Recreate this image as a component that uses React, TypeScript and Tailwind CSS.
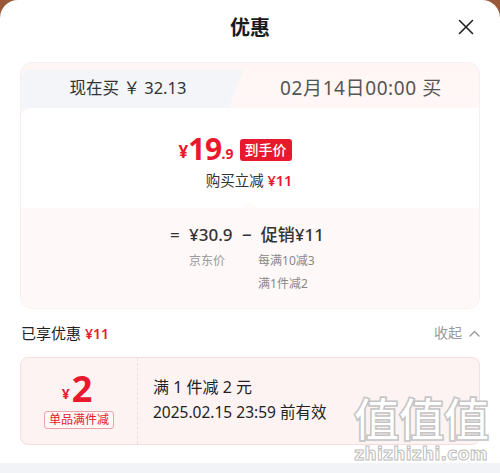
import React from "react";

const font = { fontFamily: '"Noto Sans", "Noto Sans CJK SC", sans-serif' };

export default function App() {
  return (
    <div className="w-[500px] h-[473px] bg-[#9a5a3a] overflow-hidden" style={font}>
      <div className="relative w-[500px] h-[473px] bg-white rounded-t-[18px] overflow-hidden flex flex-col">
        {/* header */}
        <div className="relative h-[56px] flex items-center justify-center">
          <span className="text-[20px] font-semibold text-[#1a1a1a] leading-none">优惠</span>
          <svg className="absolute right-[26px] top-[19px]" width="16" height="16" viewBox="0 0 16 16" fill="none" stroke="#222" strokeWidth="1.6" strokeLinecap="round">
            <path d="M1.5 1.5 L14.5 14.5 M14.5 1.5 L1.5 14.5" />
          </svg>
        </div>

        {/* main card */}
        <div className="mx-5 mt-[6px] rounded-xl border border-[#f8f0f0] overflow-hidden bg-gradient-to-b from-[#fff5f5] to-white">
          <div className="flex h-[45px]">
            <div className="relative w-[222px] mt-[6px]">
              <div className="absolute inset-0 bg-[#f4f5f9] rounded-tl-[10px] [clip-path:polygon(0_0,100%_0,calc(100%-14px)_100%,0_100%)]" />
              <div className="relative h-full flex items-center justify-center pr-[8px] text-[16.5px] text-[#333] leading-none">
                现在买 ￥ 32.13
              </div>
            </div>
            <div className="flex-1 flex items-center justify-center pt-[6px] text-[19px] tracking-[0.6px] text-[#555] leading-none">
              02月14日00:00 买
            </div>
          </div>

          <div className="bg-white rounded-tl-[10px] h-[100px] flex flex-col items-center pt-[28px]">
            <div className="flex items-end h-[26px] ml-[-30px]">
              <span className="text-[#e8192c] font-bold text-[17px] leading-none mb-[2px]">¥</span>
              <span className="text-[#e8192c] font-bold text-[30px] leading-none tracking-[-0.5px] mb-[-2px]">19</span>
              <span className="text-[#e8192c] font-bold text-[14px] leading-none mb-[1px]">.9</span>
              <span className="ml-[6px] mb-[1px] bg-[#e8192c] text-white text-[14px] font-medium leading-none px-[5px] py-[4px] rounded-[3px]">到手价</span>
            </div>
            <div className="mt-[11px] ml-[-2px] text-[14.5px] text-[#333] leading-none">
              购买立减 <span className="text-[#e8192c] font-semibold">¥11</span>
            </div>
          </div>

          <div className="relative bg-[#fff8f8] h-[100px] flex justify-center pt-[16px]">
            <div className="absolute left-1/2 -top-[6px] -ml-[7px] w-0 h-0 border-l-[7px] border-r-[7px] border-b-[6px] border-l-transparent border-r-transparent border-b-[#fff8f8]" />
            <div className="flex flex-col ml-[-6px]">
              <div className="flex items-center gap-x-[9px] h-[20px] text-[17px] text-[#333] font-medium leading-none">
                <span className="w-[10px]">=</span>
                <span className="w-[44px]">¥30.9</span>
                <span>−</span>
                <span>促销¥11</span>
              </div>
              <div className="flex text-[12px] leading-none">
                <span className="ml-[19px] w-[53px] text-[#999] mt-[11px]">京东价</span>
                <div className="ml-[16px] flex flex-col text-[#888] gap-[11px] mt-[11px]">
                  <span>每满10减3</span>
                  <span>满1件减2</span>
                </div>
              </div>
            </div>
          </div>
        </div>

        {/* enjoyed */}
        <div className="mx-5 mt-[14px] flex items-center justify-between h-[20px]">
          <span className="text-[15px] text-[#222] leading-none pl-[1px]">
            已享优惠 <span className="text-[#e8192c] font-semibold text-[14px]">¥11</span>
          </span>
          <span className="flex items-center text-[14px] text-[#999] leading-none">
            收起
            <svg className="ml-[7px]" width="11" height="7" viewBox="0 0 11 7" fill="none" stroke="#999" strokeWidth="1.4" strokeLinecap="round" strokeLinejoin="round">
              <path d="M1 6 L5.5 1.5 L10 6" />
            </svg>
          </span>
        </div>

        {/* coupon */}
        <div className="mx-5 mt-[14px] h-[88px] rounded-lg border border-[#f6dede] bg-[#fdf3f3] flex">
          <div className="w-[117px] border-r border-dashed border-[#f3dcdc] flex flex-col items-center justify-center">
            <div className="flex items-end text-[#e8192c] font-bold leading-none ml-[-4px]">
              <span className="text-[14px] mb-[3px]">¥</span>
              <span className="text-[36px] ml-[2px] leading-[30px]">2</span>
            </div>
            <span className="mt-[7px] text-[12px] text-[#e8192c] leading-none border border-[#f0a0a6] rounded-[3px] px-[4px] py-[2px] bg-white/40">
              单品满件减
            </span>
          </div>
          <div className="flex flex-col justify-center pl-[15px] pb-[2px]">
            <span className="text-[16px] text-[#222] leading-none">满 1 件减 2 元</span>
            <span className="mt-[10px] text-[15.5px] text-[#222] leading-none">2025.02.15 23:59 前有效</span>
          </div>
        </div>

        <div className="flex-1" />
        <div className="h-[10px] bg-[#f2f3f7]" />

        {/* watermark */}
        <div className="absolute left-[350px] top-[393px] w-[142px] flex flex-col items-center pointer-events-none">
          <span className="text-[46px] leading-[46px] font-bold text-white tracking-[-1px] [-webkit-text-stroke:1.5px_#c4c4c4]" style={{ fontFamily: '"Noto Sans CJK SC", sans-serif' }}>
            值值值
          </span>
          <span className="mt-[7px] text-[17px] leading-[17px] font-bold text-white tracking-[0.3px] [-webkit-text-stroke:1px_#bdbdbd]" style={{ fontFamily: '"DejaVu Sans", sans-serif' }}>
            zhizhizhi.com
          </span>
        </div>
      </div>
    </div>
  );
}
